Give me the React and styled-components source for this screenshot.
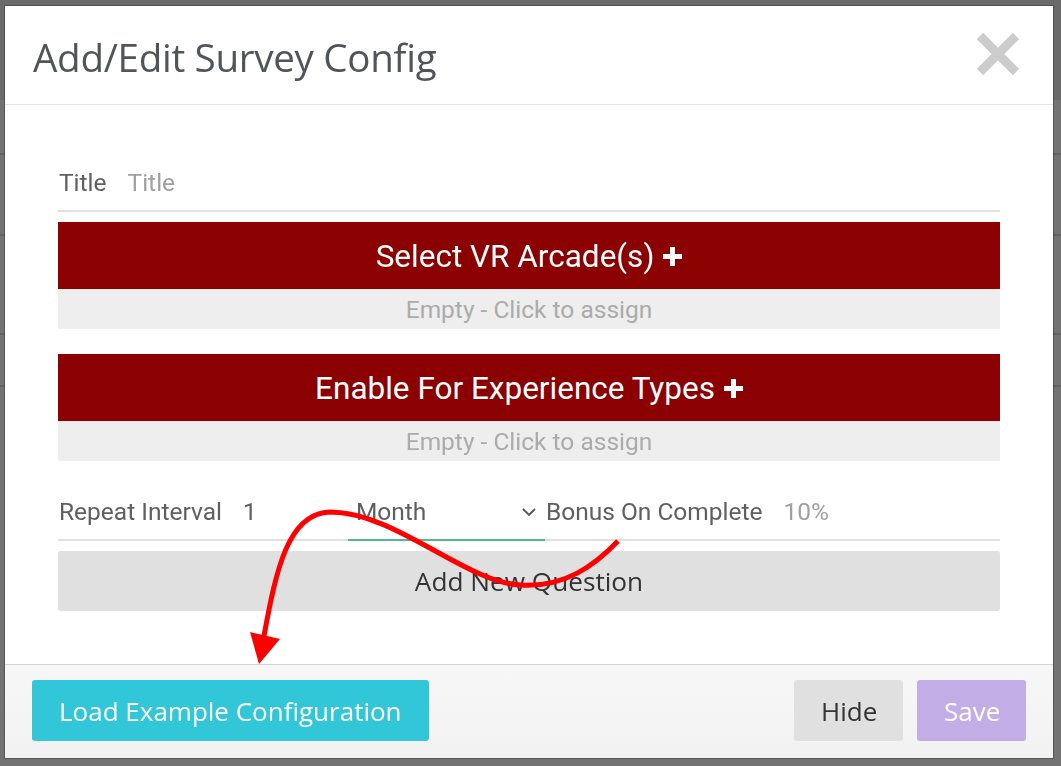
import React from 'react';
import styled, { createGlobalStyle } from 'styled-components';

const GlobalStyle = createGlobalStyle`
    html, body {
        margin: 0;
        padding: 0;
        background: #ffffff;
        font-family: Roboto, "Liberation Sans", sans-serif;
    }
    * {
        box-sizing: border-box;
    }
`;

// page that sits behind the modal overlay
const Page = styled.div`
    height: 766px;
    overflow: hidden;
`;

const PageTop = styled.div`
    height: 100px;
    background: #ececec;
`;

const PageRow = styled.div`
    height: ${p => p.h}px;
    border-bottom: 2px solid #dcdcdc;
`;

const Overlay = styled.div`
    position: fixed;
    inset: 0;
    background: rgba(0, 0, 0, 0.55);
    padding: 6px 8px 8px 5px;
`;

const Modal = styled.div`
    height: 100%;
    background: #fff;
    display: flex;
    flex-direction: column;
    box-shadow: 0 0 0 1px rgba(0, 0, 0, 0.25);
`;

const Header = styled.div`
    height: 99px;
    flex-shrink: 0;
    display: flex;
    align-items: center;
    justify-content: space-between;
    padding: 0 32px 0 28px;
    border-bottom: 1px solid #e5e5e5;
`;

const Heading = styled.h1`
    margin: 3px 0 0;
    font-family: "Open Sans", sans-serif;
    font-weight: 400;
    font-size: 38.6px;
    letter-spacing: -0.3px;
    color: #51555a;
`;

const Close = styled.button`
    border: none;
    background: none;
    padding: 0;
    width: 46px;
    height: 46px;
    cursor: pointer;
    margin-top: -2px;
`;

const Body = styled.div`
    flex: 1;
    padding: 65px 53px 0 53px;
    display: flex;
    flex-direction: column;
`;

const Field = styled.div`
    display: flex;
    align-items: flex-end;
    height: 42px;
    padding-bottom: 14px;
    border-bottom: 2px solid #e0e0e0;
    margin-top: ${p => p.mt || 0}px;
`;

const Label = styled.span`
    font-size: 24.5px;
    line-height: 26px;
    color: #5f5f5f;
    margin-left: 1px;
    margin-right: 21px;
    white-space: nowrap;
`;

const Value = styled.span`
    font-size: 24.5px;
    line-height: 26px;
    color: ${p => (p.placeholder ? '#a0a0a0' : '#5f5f5f')};
    width: ${p => (p.w ? `${p.w}px` : 'auto')};
    white-space: nowrap;
`;

const SelectBox = styled.div`
    width: 197px;
    display: flex;
    align-items: center;
    justify-content: space-between;
    padding: 0 8px 15px 8px;
    margin-bottom: -16px;
    height: 42px;
    border-bottom: 2px solid #4fba8c;
    font-size: 24.5px;
    line-height: 26px;
    color: #5f5f5f;
`;

const AssignBar = styled.div`
    height: 67px;
    margin-top: ${p => p.mt}px;
    background: #8b0000;
    color: #fff;
    font-size: 31.5px;
    display: flex;
    align-items: center;
    justify-content: center;
    gap: 9px;
    cursor: pointer;
    padding-top: 2px;
`;

const AssignEmpty = styled.div`
    height: 40px;
    background: #eeeeee;
    color: #ababab;
    font-size: 24.5px;
    display: flex;
    align-items: center;
    justify-content: center;
`;

const AddButton = styled.button`
    margin-top: 10px;
    height: 60px;
    border: none;
    border-radius: 3px;
    background: #e0e0e0;
    color: #333;
    font-family: "Open Sans", sans-serif;
    font-size: 26.2px;
    cursor: pointer;
`;

const Footer = styled.div`
    height: 94px;
    flex-shrink: 0;
    border-top: 1px solid #d2d2d2;
    background: linear-gradient(#f7f7f7, #f2f2f2);
    display: flex;
    align-items: center;
    padding: 0 27px 2px 27px;
    gap: 14px;
`;

const FooterButton = styled.button`
    height: 61px;
    width: ${p => (p.w ? `${p.w}px` : 'auto')};
    padding: 0 27px;
    border: none;
    border-radius: 3px;
    font-family: "Open Sans", sans-serif;
    font-size: 26px;
    cursor: pointer;
    background: ${p => p.bg};
    color: ${p => p.fg};
    margin-right: ${p => (p.push ? 'auto' : '0')};
`;

const ArrowLayer = styled.svg`
    position: fixed;
    left: 0;
    top: 0;
    pointer-events: none;
`;

const PlusIcon = () => (
    <svg width="19" height="19" viewBox="0 0 19 19">
        <rect x="7" y="0" width="5" height="19" fill="#fff" />
        <rect x="0" y="7" width="19" height="5" fill="#fff" />
    </svg>
);

const Chevron = () => (
    <svg width="16" height="10" viewBox="0 0 16 10">
        <polyline points="2,2 8,8 14,2" fill="none" stroke="#555" strokeWidth="1.8" />
    </svg>
);

const CloseIcon = () => (
    <svg width="46" height="46" viewBox="0 0 46 46">
        <path d="M5 5 L41 41 M41 5 L5 41" stroke="#cccccc" strokeWidth="9" />
    </svg>
);

const Assign = ({ title, mt }) => (
    <>
        <AssignBar mt={mt}>
            {title} <PlusIcon />
        </AssignBar>
        <AssignEmpty>Empty - Click to assign</AssignEmpty>
    </>
);

export default function App() {
    return (
        <>
            <GlobalStyle />
            <Page>
                <PageTop />
                <PageRow h={55} />
                <PageRow h={81} />
                <PageRow h={99} />
                <PageRow h={52} />
            </Page>
            <Overlay>
                <Modal>
                    <Header>
                        <Heading>Add/Edit Survey Config</Heading>
                        <Close aria-label="close"><CloseIcon /></Close>
                    </Header>
                    <Body>
                        <Field>
                            <Label>Title</Label>
                            <Value placeholder="true">Title</Value>
                        </Field>
                        <Assign title="Select VR Arcade(s)" mt={10} />
                        <Assign title="Enable For Experience Types" mt={25} />
                        <Field mt={38}>
                            <Label>Repeat Interval</Label>
                            <Value w={105}>1</Value>
                            <SelectBox>
                                <span>Month</span>
                                <Chevron />
                            </SelectBox>
                            <Label>Bonus On Complete</Label>
                            <Value placeholder="true">10%</Value>
                        </Field>
                        <AddButton>Add New Question</AddButton>
                    </Body>
                    <Footer>
                        <FooterButton bg="#31c7d9" fg="#fff" push>Load Example Configuration</FooterButton>
                        <FooterButton bg="#e0e0e0" fg="#333" w={109}>Hide</FooterButton>
                        <FooterButton bg="#c3ade6" fg="#fff" w={109}>Save</FooterButton>
                    </Footer>
                </Modal>
            </Overlay>
            <ArrowLayer width="1061" height="766">
                <path
                    d="M618 541 C595 565 565 588 520 585 C465 582 395 512 330 512 C288 513 276 570 264 636"
                    fill="none"
                    stroke="#ff0000"
                    strokeWidth="5"
                />
                <polygon points="250,632 280,639 259,664" fill="#ff0000" />
            </ArrowLayer>
        </>
    );
}
